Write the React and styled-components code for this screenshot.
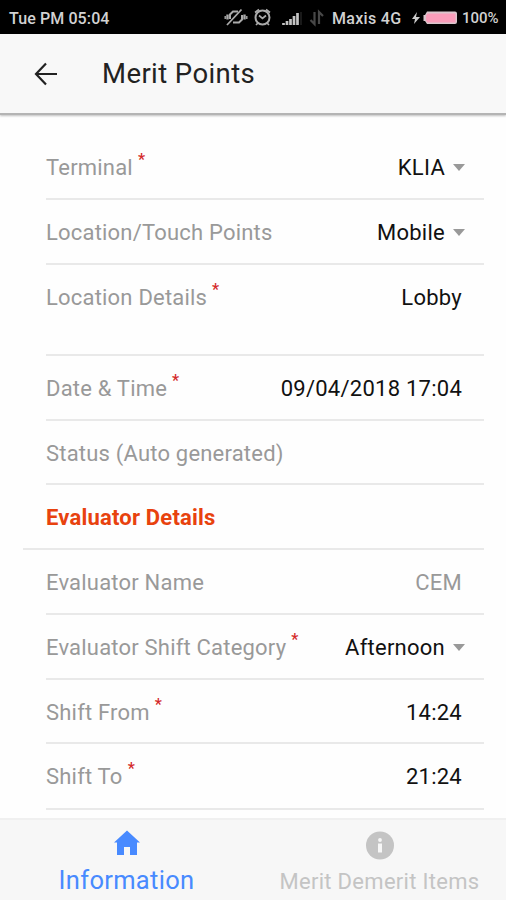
import styled, { createGlobalStyle } from "styled-components";
import { useState } from "react";

const GlobalStyle = createGlobalStyle`
  * {
    box-sizing: border-box;
  }
  body {
    margin: 0;
    font-family: Roboto, "Liberation Sans", sans-serif;
  }
`;

const FIELDS = [
  { label: "Terminal", required: true, value: "KLIA", select: true, height: 65 },
  { label: "Location/Touch Points", value: "Mobile", select: true, height: 65 },
  { label: "Location Details", required: true, value: "Lobby", height: 91 },
  { label: "Date & Time", required: true, value: "09/04/2018 17:04", height: 65 },
  { label: "Status (Auto generated)", height: 64 },
  { label: "Evaluator Details", heading: true, height: 65 },
  { label: "Evaluator Name", value: "CEM", disabled: true, height: 65 },
  { label: "Evaluator Shift Category", required: true, value: "Afternoon", select: true, height: 65 },
  { label: "Shift From", required: true, value: "14:24", height: 64 },
  { label: "Shift To", required: true, value: "21:24", height: 66 },
];

const Screen = styled.div`
  display: flex;
  flex-direction: column;
  height: 900px;
  background-color: #fefefe;
  overflow: hidden;
`;

const StatusBar = styled.div`
  flex: none;
  display: flex;
  align-items: center;
  height: 34px;
  padding: 2px 8px 0 9px;
  background-color: #000;
  color: #d2d2d2;
  font-size: 16px;
  font-weight: 500;
  white-space: nowrap;
`;

const Clock = styled.span`
  flex: 1;
  letter-spacing: 0.1px;
`;

const StatusIcons = styled.svg`
  flex: none;
  margin-right: 5px;
`;

const Carrier = styled.span`
  width: 79px;
  letter-spacing: 0.3px;
`;

const Battery = styled.svg`
  flex: none;
  margin-right: 4px;
`;

const Percent = styled.span`
  width: 36px;
  font-size: 15px;
`;

const Header = styled.header`
  flex: none;
  display: flex;
  align-items: center;
  height: 81px;
  padding-left: 34px;
  background-color: #f8f8f8;
  border-bottom: 2px solid #b4b4b4;
  box-shadow: 0 1px 2px rgba(0, 0, 0, 0.25);
`;

const Title = styled.h1`
  margin: 0 0 0 44px;
  color: #222;
  font-size: 27.5px;
  font-weight: 400;
  letter-spacing: 0.4px;
`;

const Form = styled.main`
  flex: 1;
  padding: 20px 22px 0 23px;
`;

const Row = styled.div`
  display: flex;
  justify-content: space-between;
  height: ${({ $height }) => $height}px;
  margin-left: ${({ $heading }) => ($heading ? 0 : 23)}px;
  padding: 18px 22px 0 ${({ $heading }) => ($heading ? 23 : 0)}px;
  border-bottom: 2px solid #e9e9e9;
  font-size: 22px;
  line-height: 30px;
  white-space: nowrap;
`;

const Label = styled.span`
  color: ${({ $heading }) => ($heading ? "#e8420e" : "#999")};
  font-weight: ${({ $heading }) => ($heading ? 700 : 400)};
  letter-spacing: 0.2px;
`;

const Required = styled.sup`
  position: relative;
  top: -10px;
  margin-left: 5px;
  color: #d42a2a;
  font-size: 16px;
  font-weight: 500;
  line-height: 0;
  vertical-align: baseline;
`;

const Value = styled.span`
  display: flex;
  align-items: center;
  height: 30px;
  margin-right: ${({ $select }) => ($select ? -3 : 0)}px;
  color: ${({ $disabled }) => ($disabled ? "#999" : "#111")};
  letter-spacing: 0.25px;
`;

const Caret = styled.span`
  margin: -1px 0 0 8px;
  border: 6.5px solid transparent;
  border-top: 7px solid #999;
  border-bottom: 0;
`;

const Tabs = styled.nav`
  flex: none;
  display: flex;
  height: 82px;
  border-top: 2px solid #f0f0f0;
  background-color: #f7f7f7;
`;

const Tab = styled.button`
  flex: 1;
  display: flex;
  flex-direction: column;
  align-items: center;
  padding: 10px 0 0;
  border: 0;
  background: none;
  color: ${({ $active }) => ($active ? "#488aff" : "#c4c4c4")};
  font-family: inherit;
  font-size: ${({ $active }) => ($active ? 25.5 : 22)}px;
  letter-spacing: 0.3px;
  line-height: 32px;
  white-space: nowrap;
`;

const TabIcon = styled.svg`
  flex: none;
  margin-bottom: 6px;
`;

const Field = ({ label, required, value, select, heading, disabled, height }) => (
  <Row $height={height} $heading={heading}>
    <Label $heading={heading}>
      {label}
      {required && <Required>*</Required>}
    </Label>
    {value && (
      <Value $select={select} $disabled={disabled}>
        {value}
        {select && <Caret />}
      </Value>
    )}
  </Row>
);

function App() {
  const [tab, setTab] = useState("information");

  return (
    <>
      <GlobalStyle />
      <Screen>
        <StatusBar>
          <Clock>Tue PM 05:04</Clock>
          <StatusIcons width="105" height="22" viewBox="0 0 105 22" fill="none" stroke="#aaa">
            {/* vibrate off */}
            <path d="M8 12V7.500l3-3h5M20 8v4.500l-3 3h-6" strokeWidth="2" />
            <path d="M5.500 7.500v5M22.500 7.500v5" strokeWidth="2.4" />
            <path d="M3.200 9v3M24.800 9v3" strokeWidth="1.4" />
            <path d="M5 18 19.500 2.500" strokeWidth="1.8" />
            {/* alarm */}
            <circle cx="40.500" cy="10.500" r="7" strokeWidth="2" />
            <path d="m37 8.500 3.500 3 3.500-3M33 5.500l4-3M48 5.500l-4-3M36 16l-2 2M45 16l2 2" strokeWidth="1.7" />
            {/* signal */}
            <path d="M61.500 18v-2M65 18v-4M68.500 18v-6M72 18V9M75.500 18V6" stroke="#c4c4c4" strokeWidth="2.700" />
            <path d="M79 18V5" stroke="#333" />
            <path d="M92.500 5v12l-4-4M97 17V5l4 4" stroke="#484848" strokeWidth="2.200" />
          </StatusIcons>
          <Carrier>Maxis 4G</Carrier>
          <Battery width="47" height="18" viewBox="0 0 47 18">
            <path d="M6 3 1 10h3l-1 5 6-7H5l1-5Z" fill="#ccc" />
            <path d="M16 2.500h28a2 2 0 0 1 2 2v8.500a2 2 0 0 1-2 2H16l-2-3h-1.500V6H14Z" fill="#d9c6cc" />
            <path d="M16.500 4.500h28v9h-28l-1.500-2V6.500Z" fill="#fa9dba" />
          </Battery>
          <Percent>100%</Percent>
        </StatusBar>
        <Header>
          <svg width="24" height="24" viewBox="0 0 24 24" fill="none" stroke="#222" strokeWidth="2.2">
            <path d="M12 1.500 2 12l10 10.500M2 12h21" />
          </svg>
          <Title>Merit Points</Title>
        </Header>
        <Form>
          {FIELDS.map((field) => (
            <Field key={field.label} {...field} />
          ))}
        </Form>
        <Tabs>
          <Tab $active={tab === "information"} onClick={() => setTab("information")}>
            <TabIcon width="28" height="28" viewBox="0 0 28 28" fill="currentColor">
              <path d="M14 .500 1 12.500h3V25h7v-8h6v8h7V12.500h3Z" />
            </TabIcon>
            Information
          </Tab>
          <Tab $active={tab === "items"} onClick={() => setTab("items")}>
            <TabIcon width="28" height="30" viewBox="0 0 28 30">
              <circle cx="14" cy="15.500" r="14" fill="currentColor" />
              <circle cx="14" cy="10" r="1.900" fill="#f7f7f7" />
              <path d="M12 13.500h4v9h-4Z" fill="#f7f7f7" />
            </TabIcon>
            Merit Demerit Items
          </Tab>
        </Tabs>
      </Screen>
    </>
  );
}

export default App;
